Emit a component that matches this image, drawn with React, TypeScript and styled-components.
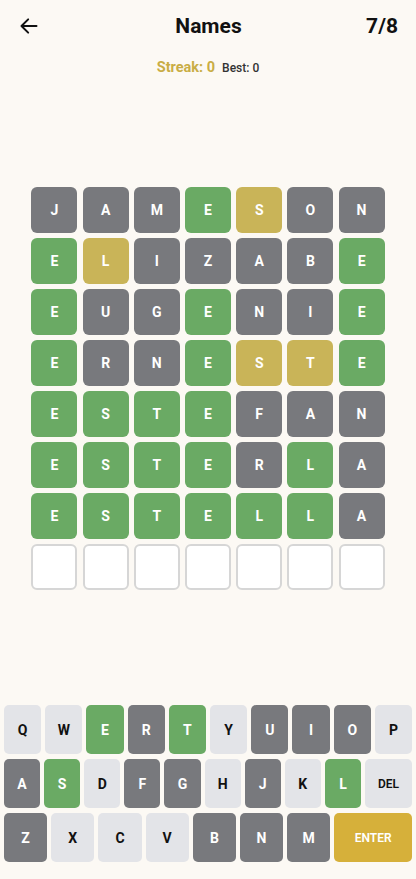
import styled, { createGlobalStyle } from 'styled-components';

type Status = 'correct' | 'present' | 'absent' | 'empty';

const GlobalStyle = createGlobalStyle`
	html, body {
		margin: 0;
		padding: 0;
		background: #fcf9f4;
	}
	* {
		box-sizing: border-box;
	}
	body {
		font-family: Roboto, 'Liberation Sans', sans-serif;
		color: #111;
	}
`;

const colors: Record<Status, string> = {
	correct: '#6aaa64',
	present: '#c9b458',
	absent: '#78797d',
	empty: '#ffffff',
};

const Page = styled.div`
	display: flex;
	flex-direction: column;
	height: 100vh;
	background: #fcf9f4;
`;

const Header = styled.header`
	display: grid;
	grid-template-columns: 60px 1fr 60px;
	align-items: center;
	height: 52px;
	padding: 0 18px 0 19px;
`;

const BackButton = styled.button`
	display: flex;
	align-items: center;
	background: none;
	border: none;
	padding: 0;
	cursor: pointer;
	color: #111;
`;

const Title = styled.h1`
	margin: 0;
	text-align: center;
	font-size: 21px;
	font-weight: 700;
`;

const Counter = styled.div`
	text-align: right;
	font-size: 21px;
	font-weight: 700;
`;

const Stats = styled.div`
	display: flex;
	justify-content: center;
	align-items: baseline;
	gap: 7px;
	margin-top: 7px;
`;

const Streak = styled.span`
	color: #c9ad45;
	font-size: 14.5px;
	font-weight: 700;
`;

const Best = styled.span`
	color: #333;
	font-size: 12px;
	font-weight: 500;
`;

const Board = styled.main`
	flex: 1;
	display: flex;
	align-items: center;
	justify-content: center;
	padding-bottom: 4px;
`;

const Grid = styled.div`
	display: grid;
	grid-template-columns: repeat(7, 46px);
	grid-auto-rows: 46px;
	gap: 5px 5.2px;
`;

const Tile = styled.div<{ $status: Status }>`
	display: flex;
	align-items: center;
	justify-content: center;
	border-radius: 6px;
	background: ${({ $status }) => colors[$status]};
	border: ${({ $status }) => ($status === 'empty' ? '2px solid #d6d6d6' : 'none')};
	color: #fff;
	font-size: 14px;
	font-weight: 700;
`;

const Keyboard = styled.div`
	display: flex;
	flex-direction: column;
	gap: 5px;
	padding: 0 4px 17px;
`;

const KeyRow = styled.div`
	display: flex;
	gap: 4px;
`;

const Key = styled.button<{ $status?: Status; $wide?: number; $enter?: boolean }>`
	flex: ${({ $wide }) => $wide ?? 1} 1 0;
	height: 49px;
	border: none;
	border-radius: 5px;
	padding: 0;
	font-family: Roboto, 'Liberation Sans', sans-serif;
	font-size: ${({ $wide }) => ($wide ? '12px' : '14px')};
	font-weight: ${({ $wide }) => ($wide ? 600 : 700)};
	background: ${({ $status, $enter }) =>
		$enter ? '#d6b03a' : $status ? colors[$status] : '#e3e4e8'};
	color: ${({ $status, $enter }) => ($status || $enter ? '#fff' : '#111')};
	cursor: pointer;
`;

const guesses: [string, string][] = [
	['JAMESON', 'aaacpaa'],
	['ELIZABE', 'cpaaaac'],
	['EUGENIE', 'caacaac'],
	['ERNESTE', 'caacppc'],
	['ESTEFAN', 'ccccaaa'],
	['ESTERLA', 'ccccaca'],
	['ESTELLA', 'cccccca'],
];

const codeMap: Record<string, Status> = { c: 'correct', p: 'present', a: 'absent' };

const keyStatus: Record<string, Status> = {
	E: 'correct', T: 'correct', S: 'correct', L: 'correct',
	R: 'absent', U: 'absent', I: 'absent', O: 'absent',
	A: 'absent', F: 'absent', G: 'absent', J: 'absent',
	Z: 'absent', B: 'absent', N: 'absent', M: 'absent',
};

const rows = ['QWERTYUIOP', 'ASDFGHJKL', 'ZXCVBNM'];

const ArrowLeft = () => (
	<svg width='20' height='20' viewBox='0 0 24 24' fill='none' stroke='currentColor' strokeWidth='2.4' strokeLinecap='round' strokeLinejoin='round'>
		<path d='M21 12H3M11 4l-8 8 8 8' />
	</svg>
);

const App = () => {
	return (
		<Page>
			<GlobalStyle />
			<Header>
				<BackButton aria-label='Back'>
					<ArrowLeft />
				</BackButton>
				<Title>Names</Title>
				<Counter>7/8</Counter>
			</Header>
			<Stats>
				<Streak>Streak: 0</Streak>
				<Best>Best: 0</Best>
			</Stats>
			<Board>
				<Grid>
					{guesses.map(([word, code]) =>
						word.split('').map((ch, i) => (
							<Tile key={word + i} $status={codeMap[code[i]]}>
								{ch}
							</Tile>
						))
					)}
					{Array.from({ length: 7 }).map((_, i) => (
						<Tile key={'empty' + i} $status='empty' />
					))}
				</Grid>
			</Board>
			<Keyboard>
				<KeyRow>
					{rows[0].split('').map((k) => (
						<Key key={k} $status={keyStatus[k]}>{k}</Key>
					))}
				</KeyRow>
				<KeyRow>
					{rows[1].split('').map((k) => (
						<Key key={k} $status={keyStatus[k]}>{k}</Key>
					))}
					<Key $wide={1.3}>DEL</Key>
				</KeyRow>
				<KeyRow>
					{rows[2].split('').map((k) => (
						<Key key={k} $status={keyStatus[k]}>{k}</Key>
					))}
					<Key $wide={1.8} $enter>ENTER</Key>
				</KeyRow>
			</Keyboard>
		</Page>
	);
};

export default App;
